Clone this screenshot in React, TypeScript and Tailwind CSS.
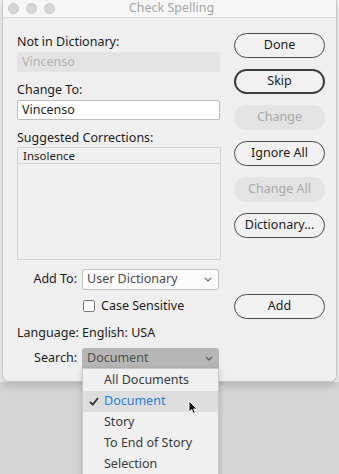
import React from "react";

const font = { fontFamily: '"Noto Sans", "Liberation Sans", sans-serif' };

function Chevron({ color = "#666" }: { color?: string }) {
  return (
    <svg width="8" height="5" viewBox="0 0 8 5" className="shrink-0">
      <path d="M0.8 0.8 L4 4 L7.2 0.8" fill="none" stroke={color} strokeWidth="1.1" />
    </svg>
  );
}

function Btn({ label, kind = "normal" }: { label: string; kind?: "normal" | "default" | "disabled" }) {
  const cls =
    kind === "disabled"
      ? "bg-[#e3e3e3] text-[#a9a9a9] border border-transparent"
      : kind === "default"
      ? "border-2 border-[#3d3d3d] text-[#1c1c1c] bg-[#f1f1f1]"
      : "border border-[#4a4a4a] text-[#1c1c1c] bg-[#f1f1f1]";
  return (
    <div className={`h-[25px] w-[91px] rounded-full flex items-center justify-center text-[12.5px] ${cls}`}>
      {label}
    </div>
  );
}

export default function App() {
  return (
    <div
      className="relative w-[339px] h-[474px] overflow-hidden bg-[linear-gradient(to_bottom,#f4f4f4_0px,#f4f4f4_382px,#d5d5d5_382px)]"
      style={font}
    >
      {/* window */}
      <div className="ml-[2px] w-[335px] h-[382px] bg-[#efefef] border-x border-b border-[#c6c6c6] rounded-b-[6px] shadow-[0_3px_10px_rgba(0,0,0,0.18)] flex flex-col">
        {/* title bar */}
        <div className="relative h-[18px] bg-[#f6f6f6] border-b border-[#dcdcdc] flex items-center">
          <div className="flex gap-[7px] pl-[5px]">
            <div className="w-[11px] h-[11px] rounded-full bg-[#d6d6d6] border border-[#cacaca]" />
            <div className="w-[11px] h-[11px] rounded-full bg-[#d6d6d6] border border-[#cacaca]" />
            <div className="w-[11px] h-[11px] rounded-full bg-[#d6d6d6] border border-[#cacaca]" />
          </div>
          <div className="absolute inset-0 flex items-center justify-center pl-[4px] text-[12.5px] text-[#a6a6a6]">
            Check Spelling
          </div>
        </div>

        {/* body */}
        <div className="flex flex-1">
          {/* left column */}
          <div className="ml-[14px] w-[203px] flex flex-col text-[12.5px] text-[#1c1c1c]">
            <div className="mt-[16px] h-[16px] leading-[16px]">Not in Dictionary:</div>
            <div className="mt-[2px] h-[20px] bg-[#e3e3e3] rounded-[2px] pl-[5px] flex items-center text-[#b2b2b2]">
              Vincenso
            </div>
            <div className="mt-[10px] h-[16px] leading-[16px]">Change To:</div>
            <div className="mt-[2px] h-[20px] bg-white border border-[#bdbdbd] rounded-[2px] pl-[4px] flex items-center">
              Vincenso
            </div>
            <div className="mt-[10px] h-[16px] leading-[16px]">Suggested Corrections:</div>
            <div className="mt-[1px] h-[113px] w-[204px] border border-[#d3d3d3] bg-[#efefef]">
              <div className="h-[16px] border-b border-[#d3d3d3] pl-[5px] flex items-center text-[11.5px]">
                Insolence
              </div>
            </div>
            {/* Add To */}
            <div className="mt-[9px] flex items-center">
              <div className="w-[65px] shrink-0 text-right pr-[5px]">Add To:</div>
              <div className="h-[21px] w-[137px] bg-[#fbfbfb] border border-[#c3c3c3] rounded-[3px] flex items-center justify-between pl-[4px] pr-[6px] text-[#4a4a4a]">
                <span>User Dictionary</span>
                <Chevron />
              </div>
            </div>
            <div className="mt-[8px] h-[16px] flex items-center pl-[66px]">
              <div className="w-[12px] h-[12px] border border-[#7a7a7a] rounded-[2px] bg-white" />
              <span className="ml-[6px]">Case Sensitive</span>
            </div>
            <div className="mt-[11px] h-[16px] leading-[16px]">Language: English: USA</div>
            <div className="mt-[7px] flex items-center">
              <div className="w-[65px] shrink-0 text-right pr-[5px]">Search:</div>
              <div className="h-[21px] w-[137px] bg-[#b6b6b6] rounded-t-[3px] flex items-center justify-between pl-[5px] pr-[6px] text-[#4f4f4f]">
                <span>Document</span>
                <Chevron color="#555" />
              </div>
            </div>
          </div>

          {/* right column */}
          <div className="ml-[14px] flex flex-col">
            <div className="mt-[15px] flex flex-col gap-[11px]">
              <Btn label="Done" />
              <Btn label="Skip" kind="default" />
              <Btn label="Change" kind="disabled" />
              <Btn label="Ignore All" />
              <Btn label="Change All" kind="disabled" />
              <Btn label="Dictionary..." />
            </div>
            <div className="mt-[56px]">
              <Btn label="Add" />
            </div>
          </div>
        </div>
      </div>

      {/* dropdown menu */}
      <div className="absolute left-[82px] top-[368px] w-[137px] h-[110px] bg-[#f0f0f0] border border-[#c9c9c9] shadow-[0_2px_6px_rgba(0,0,0,0.2)] text-[12.5px] text-[#3a3a3a] pt-[1px]">
        <div className="h-[21px] flex items-center pl-[21px]">All Documents</div>
        <div className="relative h-[21px] flex items-center pl-[21px] bg-[#dedede] text-[#2a7fd4]">
          <svg width="10" height="9" viewBox="0 0 10 9" className="absolute left-[6px] top-[6px]">
            <path d="M1 4.8 L3.8 7.6 L9 1" fill="none" stroke="#333" strokeWidth="1.8" />
          </svg>
          Document
        </div>
        <div className="h-[21px] flex items-center pl-[21px]">Story</div>
        <div className="h-[21px] flex items-center pl-[21px]">To End of Story</div>
        <div className="h-[21px] flex items-center pl-[21px]">Selection</div>
      </div>

      {/* cursor */}
      <svg width="11" height="15" viewBox="0 0 11 15" className="absolute left-[188px] top-[400px]">
        <path d="M1 1 L1 12 L3.6 9.6 L5.4 13.6 L7.2 12.8 L5.5 9 L9 9 Z" fill="#111" stroke="#fff" strokeWidth="0.9" />
      </svg>
    </div>
  );
}
